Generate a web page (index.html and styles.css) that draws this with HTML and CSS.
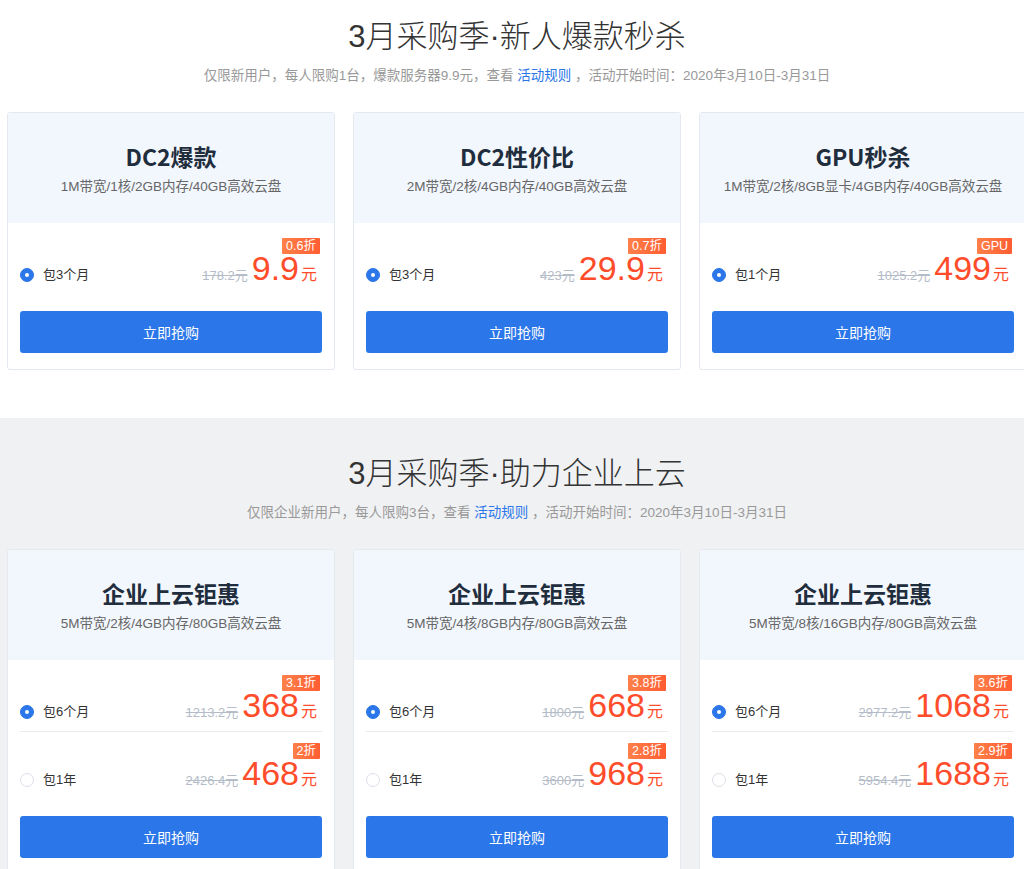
FILE: index.html
```html
<!DOCTYPE html>
<html lang="zh-CN">
<head>
<meta charset="utf-8">
<title>3月采购季</title>
<link rel="stylesheet" href="styles.css">
</head>
<body>
<section class="sec sec-new">
  <div class="wrap">
    <h1 class="sec-title">3月采购季·新人爆款秒杀</h1>
    <p class="sec-sub">仅限新用户，每人限购1台，爆款服务器9.9元，查看 <a class="rule" href="#">活动规则</a> ，活动开始时间：2020年3月10日-3月31日</p>
    <div class="cards">
      <div class="card">
        <div class="card-head"><h2 class="card-title">DC2爆款</h2><p class="card-spec">1M带宽/1核/2GB内存/40GB高效云盘</p></div>
        <div class="card-body">
          <div class="opt">
            <div class="opt-left"><span class="radio on"></span><span class="opt-label">包3个月</span></div>
            <div class="price"><span class="badge">0.6折</span><div class="price-line"><span class="old">178.2元</span><span class="num">9.9</span><span class="yuan">元</span></div></div>
          </div>
          <button class="buy">立即抢购</button>
        </div>
      </div>
      <div class="card">
        <div class="card-head"><h2 class="card-title">DC2性价比</h2><p class="card-spec">2M带宽/2核/4GB内存/40GB高效云盘</p></div>
        <div class="card-body">
          <div class="opt">
            <div class="opt-left"><span class="radio on"></span><span class="opt-label">包3个月</span></div>
            <div class="price"><span class="badge">0.7折</span><div class="price-line"><span class="old">423元</span><span class="num">29.9</span><span class="yuan">元</span></div></div>
          </div>
          <button class="buy">立即抢购</button>
        </div>
      </div>
      <div class="card">
        <div class="card-head"><h2 class="card-title">GPU秒杀</h2><p class="card-spec">1M带宽/2核/8GB显卡/4GB内存/40GB高效云盘</p></div>
        <div class="card-body">
          <div class="opt">
            <div class="opt-left"><span class="radio on"></span><span class="opt-label">包1个月</span></div>
            <div class="price"><span class="badge">GPU</span><div class="price-line"><span class="old">1025.2元</span><span class="num">499</span><span class="yuan">元</span></div></div>
          </div>
          <button class="buy">立即抢购</button>
        </div>
      </div>
    </div>
  </div>
</section>
<section class="sec sec-ent">
  <div class="wrap">
    <h1 class="sec-title">3月采购季·助力企业上云</h1>
    <p class="sec-sub">仅限企业新用户，每人限购3台，查看 <a class="rule" href="#">活动规则</a> ，活动开始时间：2020年3月10日-3月31日</p>
    <div class="cards">
      <div class="card">
        <div class="card-head"><h2 class="card-title">企业上云钜惠</h2><p class="card-spec">5M带宽/2核/4GB内存/80GB高效云盘</p></div>
        <div class="card-body">
          <div class="opt">
            <div class="opt-left"><span class="radio on"></span><span class="opt-label">包6个月</span></div>
            <div class="price"><span class="badge">3.1折</span><div class="price-line"><span class="old">1213.2元</span><span class="num">368</span><span class="yuan">元</span></div></div>
          </div>
          <div class="opt">
            <div class="opt-left"><span class="radio"></span><span class="opt-label">包1年</span></div>
            <div class="price"><span class="badge">2折</span><div class="price-line"><span class="old">2426.4元</span><span class="num">468</span><span class="yuan">元</span></div></div>
          </div>
          <button class="buy">立即抢购</button>
        </div>
      </div>
      <div class="card">
        <div class="card-head"><h2 class="card-title">企业上云钜惠</h2><p class="card-spec">5M带宽/4核/8GB内存/80GB高效云盘</p></div>
        <div class="card-body">
          <div class="opt">
            <div class="opt-left"><span class="radio on"></span><span class="opt-label">包6个月</span></div>
            <div class="price"><span class="badge">3.8折</span><div class="price-line"><span class="old">1800元</span><span class="num">668</span><span class="yuan">元</span></div></div>
          </div>
          <div class="opt">
            <div class="opt-left"><span class="radio"></span><span class="opt-label">包1年</span></div>
            <div class="price"><span class="badge">2.8折</span><div class="price-line"><span class="old">3600元</span><span class="num">968</span><span class="yuan">元</span></div></div>
          </div>
          <button class="buy">立即抢购</button>
        </div>
      </div>
      <div class="card">
        <div class="card-head"><h2 class="card-title">企业上云钜惠</h2><p class="card-spec">5M带宽/8核/16GB内存/80GB高效云盘</p></div>
        <div class="card-body">
          <div class="opt">
            <div class="opt-left"><span class="radio on"></span><span class="opt-label">包6个月</span></div>
            <div class="price"><span class="badge">3.6折</span><div class="price-line"><span class="old">2977.2元</span><span class="num">1068</span><span class="yuan">元</span></div></div>
          </div>
          <div class="opt">
            <div class="opt-left"><span class="radio"></span><span class="opt-label">包1年</span></div>
            <div class="price"><span class="badge">2.9折</span><div class="price-line"><span class="old">5954.4元</span><span class="num">1688</span><span class="yuan">元</span></div></div>
          </div>
          <button class="buy">立即抢购</button>
        </div>
      </div>
    </div>
  </div>
</section>
</body>
</html>
```
FILE: styles.css
```css
html, body {
  overflow-x: hidden;
}
body {
  margin: 0;
  background: #fff;
  font-family: "Liberation Sans", "Noto Sans CJK SC", sans-serif;
  color: #333;
}
.sec {
  padding-bottom: 48px;
}
.sec-new {
  background: #fff;
  padding-top: 15px;
}
.sec-ent {
  background: #f0f1f3;
  padding-top: 34px;
}
.wrap {
  width: 1020px;
  margin-left: 7px;
}
.sec-title {
  margin: 0;
  height: 44px;
  line-height: 44px;
  text-align: center;
  font-family: "Liberation Sans", "Noto Sans CJK SC", sans-serif;
  font-weight: 300;
  font-size: 31px;
  color: #333;
}
.sec-sub {
  margin: 7px 0 0;
  line-height: 20px;
  text-align: center;
  font-size: 13.5px;
  color: #999;
}
.rule {
  color: #2b76e8;
  text-decoration: none;
}
.cards {
  margin-top: 26px;
  display: grid;
  grid-template-columns: repeat(3, 328px);
  gap: 18px;
}
.card {
  background: #fff;
  border: 1px solid #e4e8ef;
  border-radius: 3px;
  overflow: hidden;
}
.card-head {
  background: #f2f7fe;
  text-align: center;
  padding: 28px 0 27px;
}
.card-title {
  margin: 0;
  line-height: 30px;
  font-size: 23px;
  font-weight: bold;
  color: #1f2d3d;
  font-family: "Noto Sans CJK SC", sans-serif;
}
.card-spec {
  margin: 7px 0 0;
  line-height: 18px;
  font-size: 13.5px;
  color: #666;
}
.card-body {
  padding: 4px 12px 16px;
}
.opt {
  display: flex;
  justify-content: space-between;
  align-items: flex-end;
  padding: 11px 5px 12px 0;
}
.opt + .opt {
  border-top: 1px solid #e8eaf0;
}
.opt-left {
  display: flex;
  align-items: center;
  height: 14px;
}
.radio {
  box-sizing: border-box;
  width: 14px;
  height: 14px;
  border-radius: 50%;
  border: 1px solid #dcdfe6;
  background: #fff;
  margin-right: 9px;
  position: relative;
}
.radio.on {
  border-color: #2b76e8;
  background: #2b76e8;
}
.radio.on::after {
  content: "";
  position: absolute;
  left: 50%;
  top: 50%;
  width: 4px;
  height: 4px;
  margin: -2px 0 0 -2px;
  border-radius: 50%;
  background: #fff;
}
.opt-label {
  font-size: 13px;
  line-height: 14px;
  color: #333;
}
.price {
  display: flex;
  flex-direction: column;
  align-items: flex-end;
}
.badge {
  height: 16px;
  line-height: 16px;
  padding: 0 4px;
  font-size: 12.5px;
  color: #fff;
  background: linear-gradient(90deg, #ff8048, #ff5d32);
  border-radius: 1px;
  margin-right: -3px;
}
.price-line {
  display: flex;
  align-items: baseline;
  height: 28px;
  line-height: 28px;
}
.old {
  font-size: 13px;
  color: #b4bcc8;
  text-decoration: line-through;
  margin-right: 4px;
}
.num {
  font-size: 34px;
  color: #ff4d2b;
}
.yuan {
  font-size: 16px;
  color: #ff4d2b;
  margin-left: 2px;
}
.buy {
  display: block;
  width: 100%;
  height: 42px;
  margin-top: 17px;
  border: 0;
  border-radius: 3px;
  background: #2b76e8;
  color: #fff;
  font-family: "Noto Sans CJK SC", sans-serif;
  font-size: 14px;
  cursor: pointer;
}
```
